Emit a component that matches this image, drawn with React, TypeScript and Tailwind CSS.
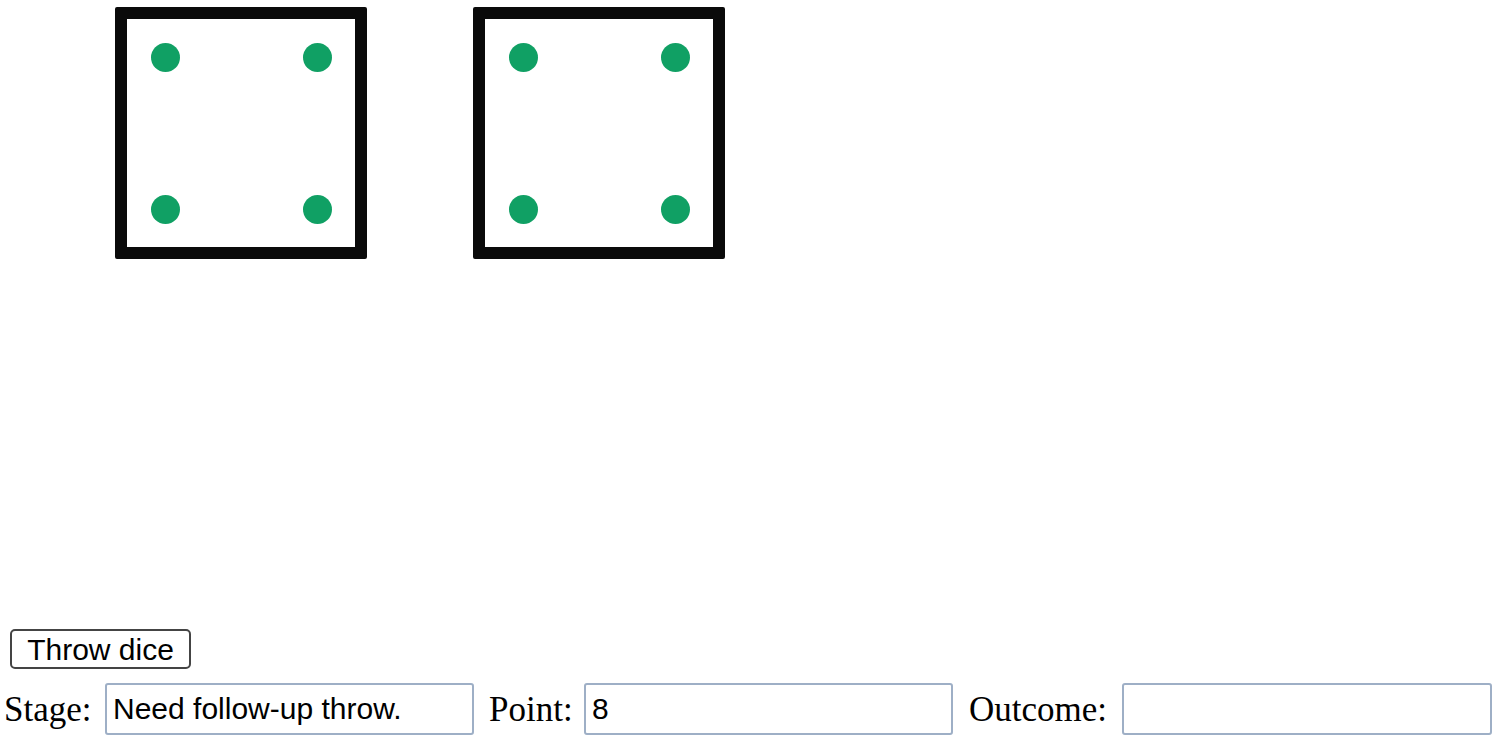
import React from "react";

function Die() {
  return (
    <div className="w-[252px] h-[252px] border-[12px] border-[#0a0a0a] rounded-[2px] bg-white relative">
      <div className="absolute left-[24px] top-[24px] w-[29px] h-[29px] rounded-full bg-[#10a064]" />
      <div className="absolute left-[176px] top-[24px] w-[29px] h-[29px] rounded-full bg-[#10a064]" />
      <div className="absolute left-[24px] top-[176px] w-[29px] h-[29px] rounded-full bg-[#10a064]" />
      <div className="absolute left-[176px] top-[176px] w-[29px] h-[29px] rounded-full bg-[#10a064]" />
    </div>
  );
}

export default function App() {
  return (
    <div className="w-[1500px] h-[741px] bg-white overflow-hidden">
      <div className="flex pt-[7px] pl-[115px] gap-[106px]">
        <Die />
        <Die />
      </div>
      <div className="mt-[370px] pl-[10px]">
        <button className="w-[181px] h-[40px] border-2 border-[#444] rounded-[5px] bg-white text-black text-[30px] leading-none flex items-center justify-center pt-[2px] [font-family:'Liberation_Sans',Arial,sans-serif]">
          Throw dice
        </button>
      </div>
      <div className="mt-[14px] flex items-center text-[35px] text-black [font-family:'Liberation_Serif','Times_New_Roman',serif]">
        <span className="ml-[4px] w-[88px] leading-none">Stage:</span>
        <input
          readOnly
          value="Need follow-up throw."
          className="ml-[13px] w-[369px] h-[52px] border-2 border-[#9eafc6] rounded-[3px] px-[6px] text-[30px] text-black outline-none [font-family:'Liberation_Sans',Arial,sans-serif]"
        />
        <span className="ml-[15px] w-[81px] leading-none">Point:</span>
        <input
          readOnly
          value="8"
          className="ml-[14px] w-[369px] h-[52px] border-2 border-[#9eafc6] rounded-[3px] px-[6px] text-[30px] text-black outline-none [font-family:'Liberation_Sans',Arial,sans-serif]"
        />
        <span className="ml-[16px] w-[139px] leading-none">Outcome:</span>
        <input
          readOnly
          value=""
          className="ml-[14px] w-[370px] h-[52px] border-2 border-[#9eafc6] rounded-[3px] px-[6px] text-[30px] text-black outline-none [font-family:'Liberation_Sans',Arial,sans-serif]"
        />
      </div>
    </div>
  );
}
